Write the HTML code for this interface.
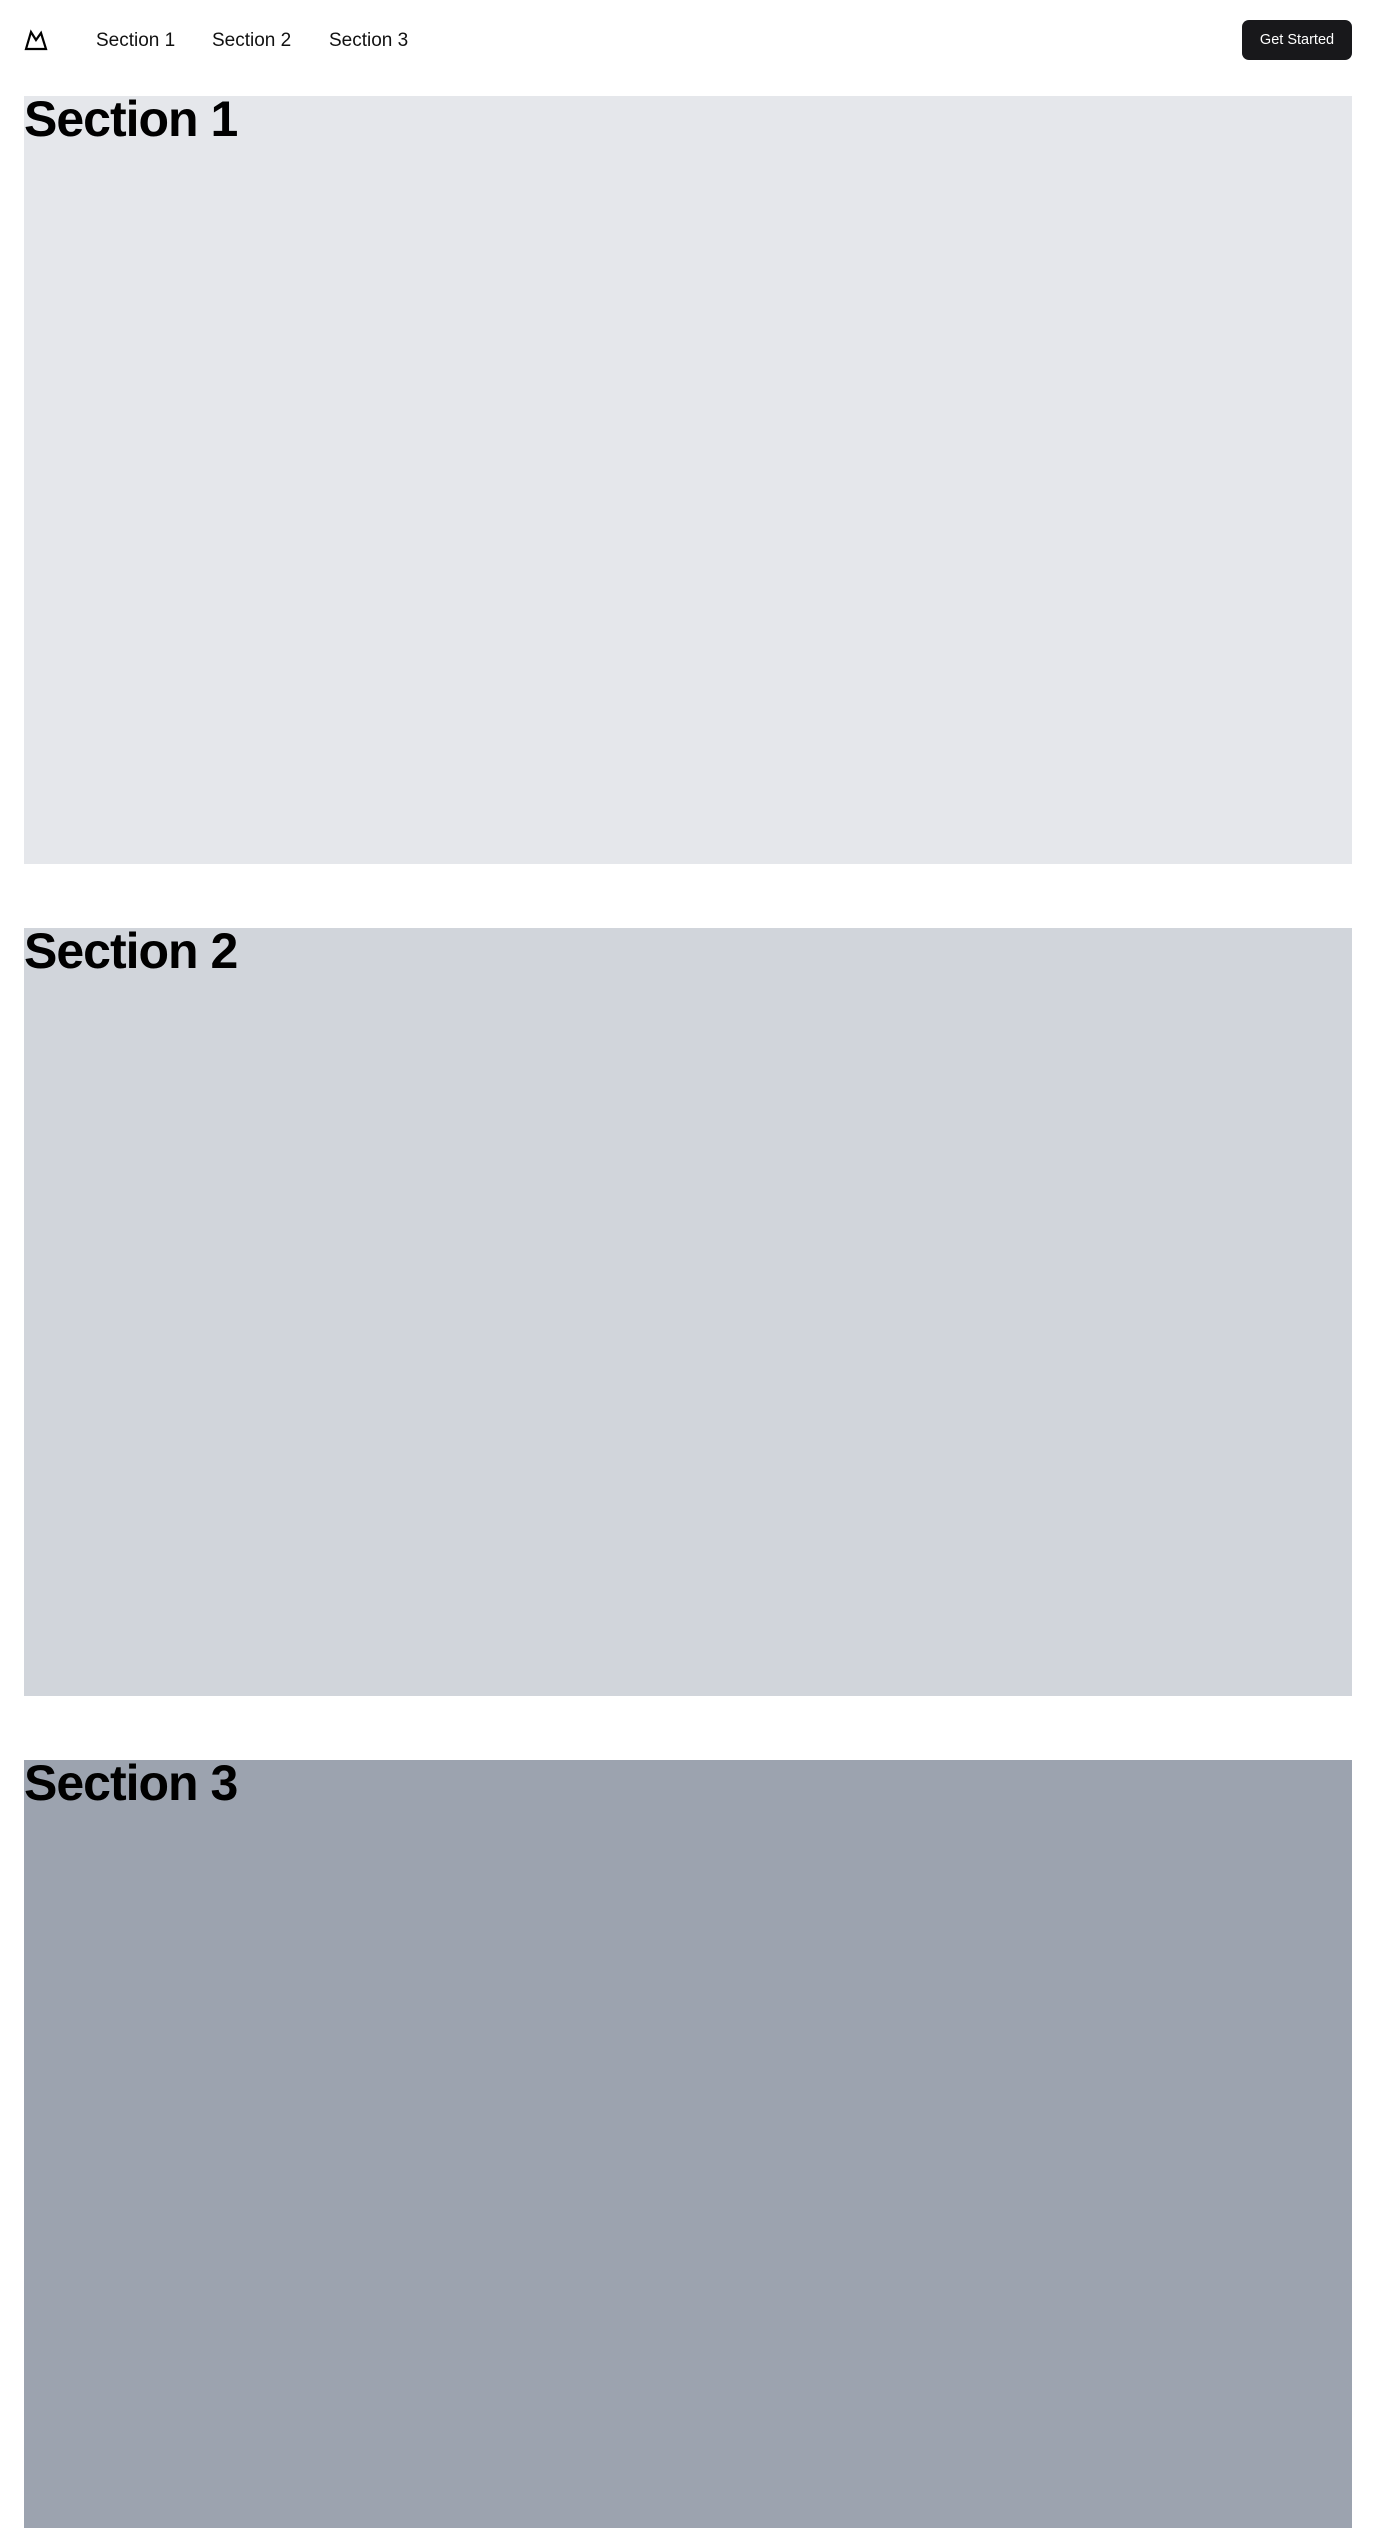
<!DOCTYPE html>
<html><head><meta charset="utf-8"><style>
*{margin:0;padding:0;box-sizing:border-box}
html,body{width:1376px;height:2528px;overflow:hidden;background:#fff;font-family:"Liberation Sans",sans-serif;color:#000}
header{position:absolute;left:0;top:0;width:1376px;height:96px}
.logo{position:absolute;left:24px;top:29px}
.nav a{position:absolute;top:29px;font-size:19px;color:#111;text-decoration:none;line-height:24px}
.btn{position:absolute;left:1242px;top:20px;width:110px;height:40px;background:#18181b;border-radius:7px;color:#fff;font-size:14.5px;line-height:40px;text-align:center}
.sec{position:absolute;left:24px;width:1328px;height:768px}
.sec h1{font-size:50px;font-weight:bold;letter-spacing:-1px;line-height:50px;margin-top:-2px}
</style></head><body>
<header>
<svg class="logo" width="24" height="22" viewBox="0 0 24 22"><path d="M2 20 L7 3 L12 11 L17 4 L22 20 Z" fill="none" stroke="#000" stroke-width="2.2" stroke-linejoin="miter"/></svg>
<div class="nav"><a style="left:96px">Section 1</a><a style="left:212px">Section 2</a><a style="left:329px">Section 3</a></div>
<div class="btn">Get Started</div>
</header>
<div class="sec" style="top:96px;background:#e5e7eb"><h1>Section 1</h1></div>
<div class="sec" style="top:928px;background:#d1d5db"><h1>Section 2</h1></div>
<div class="sec" style="top:1760px;background:#9ca3af"><h1>Section 3</h1></div>
</body></html>
